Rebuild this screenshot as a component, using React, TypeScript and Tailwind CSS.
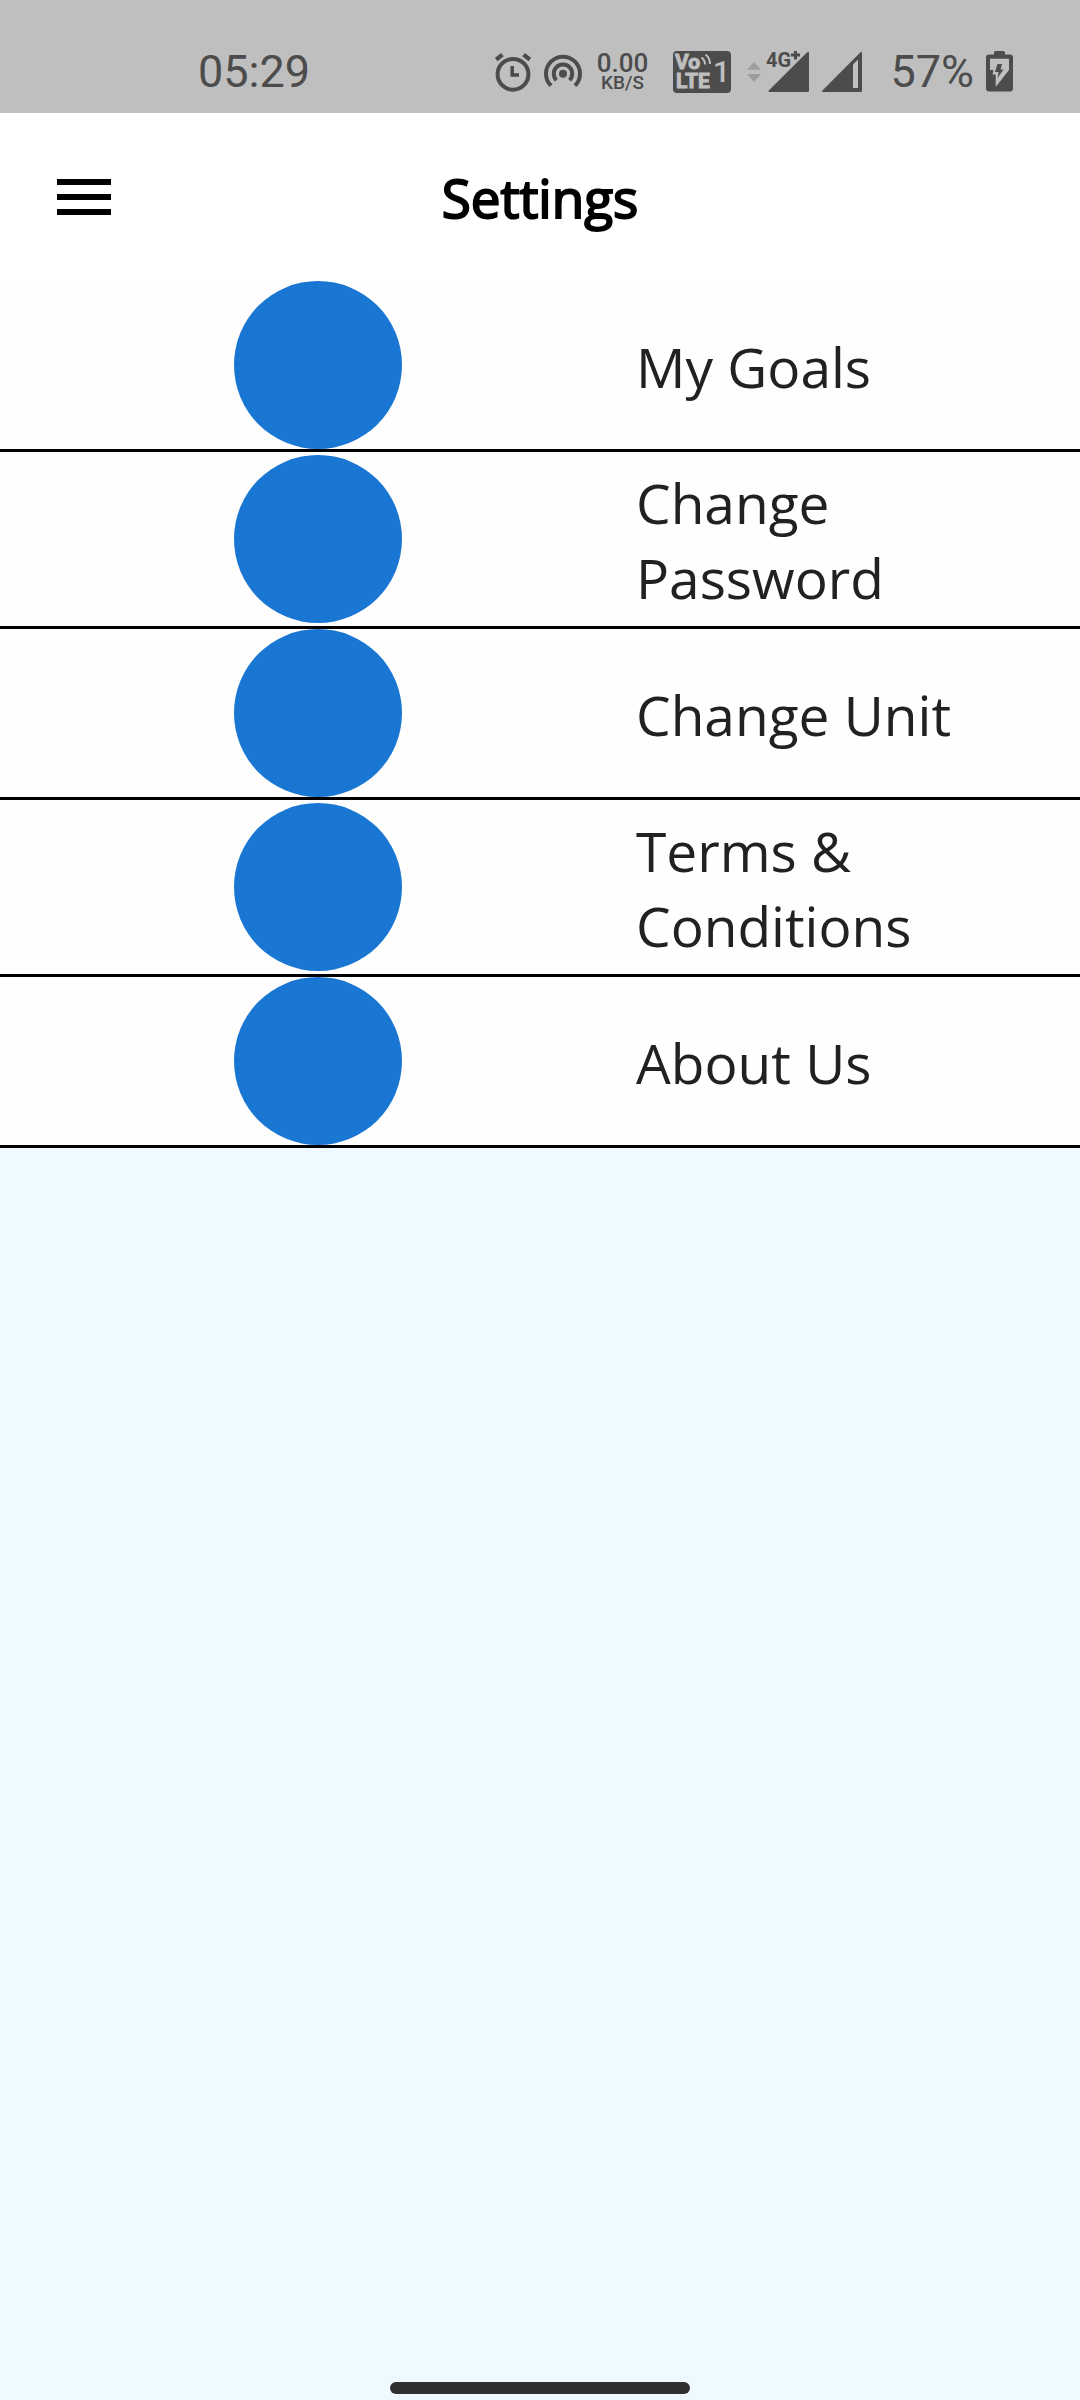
const items = ["My Goals", "Change Password", "Change Unit", "Terms & Conditions", "About Us"];

function AlarmIcon() {
  return (
    <svg width="36" height="42" viewBox="0 0 36 42" fill="none" stroke="currentColor" aria-hidden="true">
      <circle cx="18" cy="23.3" r="15.4" strokeWidth="4" />
      <path d="M1.2 8.6 7.4 3.6M34.8 8.6 28.6 3.6" strokeWidth="4.2" />
      <path d="M17.2 15v9h6.8" strokeWidth="3.6" />
    </svg>
  );
}

function HotspotIcon() {
  return (
    <svg width="38" height="42" viewBox="0 0 38 42" fill="none" stroke="currentColor" strokeWidth="4" aria-hidden="true">
      <path d="M7 34.7A17 17 0 1 1 31 34.7" />
      <path d="M12.5 29.2A9.2 9.2 0 1 1 25.5 29.2" />
      <circle cx="19" cy="22.7" r="4" fill="currentColor" stroke="none" />
    </svg>
  );
}

function VolteIcon() {
  return (
    <svg width="58" height="42" viewBox="0 0 58 42" role="img" aria-label="VoLTE 1">
      <rect width="58" height="42" rx="4" fill="currentColor" />
      <g fill="#bfbfbf" stroke="#bfbfbf" fontFamily="Roboto, sans-serif">
        <text x="2" y="18" fontSize="21" fontWeight="700" strokeWidth="1">Vo</text>
        <text x="3" y="37" fontSize="21" fontWeight="700" strokeWidth="1">LTE</text>
        <text x="40" y="31" fontSize="30" fontWeight="500" stroke="none">1</text>
      </g>
      <path d="M28.5 6.5q3.5 2.5 3.5 7M32.5 3.5q4.500 3.500 4.500 9.500" fill="none" stroke="#bfbfbf" strokeWidth="2" />
    </svg>
  );
}

function DataArrowsIcon() {
  return (
    <svg width="14" height="42" viewBox="0 0 14 42" fill="#9d9d9d" aria-hidden="true">
      <path d="M0 18.700 7 11l7 7.700zM0 23h14l-7 8z" />
    </svg>
  );
}

function Signal4GIcon() {
  return (
    <svg width="43" height="42" viewBox="0 0 43 42" fill="currentColor" role="img" aria-label="4G+" className="overflow-visible">
      <path d="M3.500 41Q1.500 41 3 39.300L41.200 1.200Q43 0 43 2V39.500Q43 41 41.500 41z" />
      <text x="0" y="15.700" fontSize="20" fontWeight="700" fontFamily="Roboto, sans-serif">4G</text>
      <path d="M25 4h9M29.500 0v8.500" stroke="currentColor" strokeWidth="3" />
    </svg>
  );
}

function SignalIcon() {
  return (
    <svg width="40" height="42" viewBox="0 0 40 42" fill="currentColor" aria-hidden="true">
      <path fillRule="evenodd" d="M1.200 41Q-.8 41 .7 39.300L38.500 1.200Q40 0 40 2V39.500Q40 41 38.500 41zM31 13.500V37h5V8.500z" />
    </svg>
  );
}

function BatteryIcon() {
  return (
    <svg width="27" height="42" viewBox="0 0 27 42" fill="currentColor" aria-hidden="true">
      <path d="M8 3.500V1.500Q8 0 9.500 0h8Q19 0 19 1.500v2h5q3 0 3 3v31q0 3-3 3H3q-3 0-3-3v-31q0-3 3-3z" />
      <path d="M4 7.700H23V19L9.700 36V23.500H6.500L7.500 19H4z" fill="#bfbfbf" />
      <path d="M11.500 13H16l-1.500 5.500h3L11.500 27l1-6H9z" />
    </svg>
  );
}

export default function App() {
  return (
    <div className="flex min-h-screen flex-col bg-[#eefaff] font-['Open_Sans',sans-serif]">
      <div className="flex h-[113px] items-center justify-between bg-[#bfbfbf] pt-[31px] pr-[67px] pl-[198px] font-[Roboto,sans-serif] text-[#4c4c4c]">
        <time className="text-[45px] leading-[42px]">05:29</time>
        <div className="flex items-center">
          <AlarmIcon />
          <div className="ml-[13px]"><HotspotIcon /></div>
          <div className="ml-3 flex w-14 flex-col items-center font-medium">
            <span className="text-[26px] leading-[22px]">0.00</span>
            <span className="text-[19px] leading-[18px]">KB/S</span>
          </div>
          <div className="ml-[23px]"><VolteIcon /></div>
          <div className="ml-4"><DataArrowsIcon /></div>
          <div className="ml-[5px]"><Signal4GIcon /></div>
          <div className="ml-[13px]"><SignalIcon /></div>
          <span className="ml-7 text-[45px] leading-[42px]">57%</span>
          <div className="ml-3"><BatteryIcon /></div>
        </div>
      </div>

      <header className="grid h-[168px] grid-cols-[1fr_auto_1fr] items-center bg-white px-[57px]">
        <button type="button" aria-label="Open menu" className="flex w-[54px] flex-col gap-[9px]">
          <span className="h-1.5 bg-black" />
          <span className="h-1.5 bg-black" />
          <span className="h-1.5 bg-black" />
        </button>
        <h1 className="text-[53px] leading-[75px] font-normal text-black [-webkit-text-stroke:2px_black]">Settings</h1>
      </header>

      <nav aria-label="Settings">
        <ul>
          {items.map((label) => (
            <li key={label} className="border-b-[3px] border-black bg-[#fefefe]">
              <button type="button" className="grid w-full grid-cols-[53fr_37fr] items-center text-left">
                <span className="size-[168px] justify-self-center rounded-full bg-[#1976d2]" />
                <span className="pt-[13px] pr-12 pb-[11px] text-[55px] leading-[75px] text-[#212121]">{label}</span>
              </button>
            </li>
          ))}
        </ul>
      </nav>

      <div className="mt-auto flex justify-center pb-1.5">
        <div className="h-3 w-[300px] rounded-full bg-[#303133]" />
      </div>
    </div>
  );
}
